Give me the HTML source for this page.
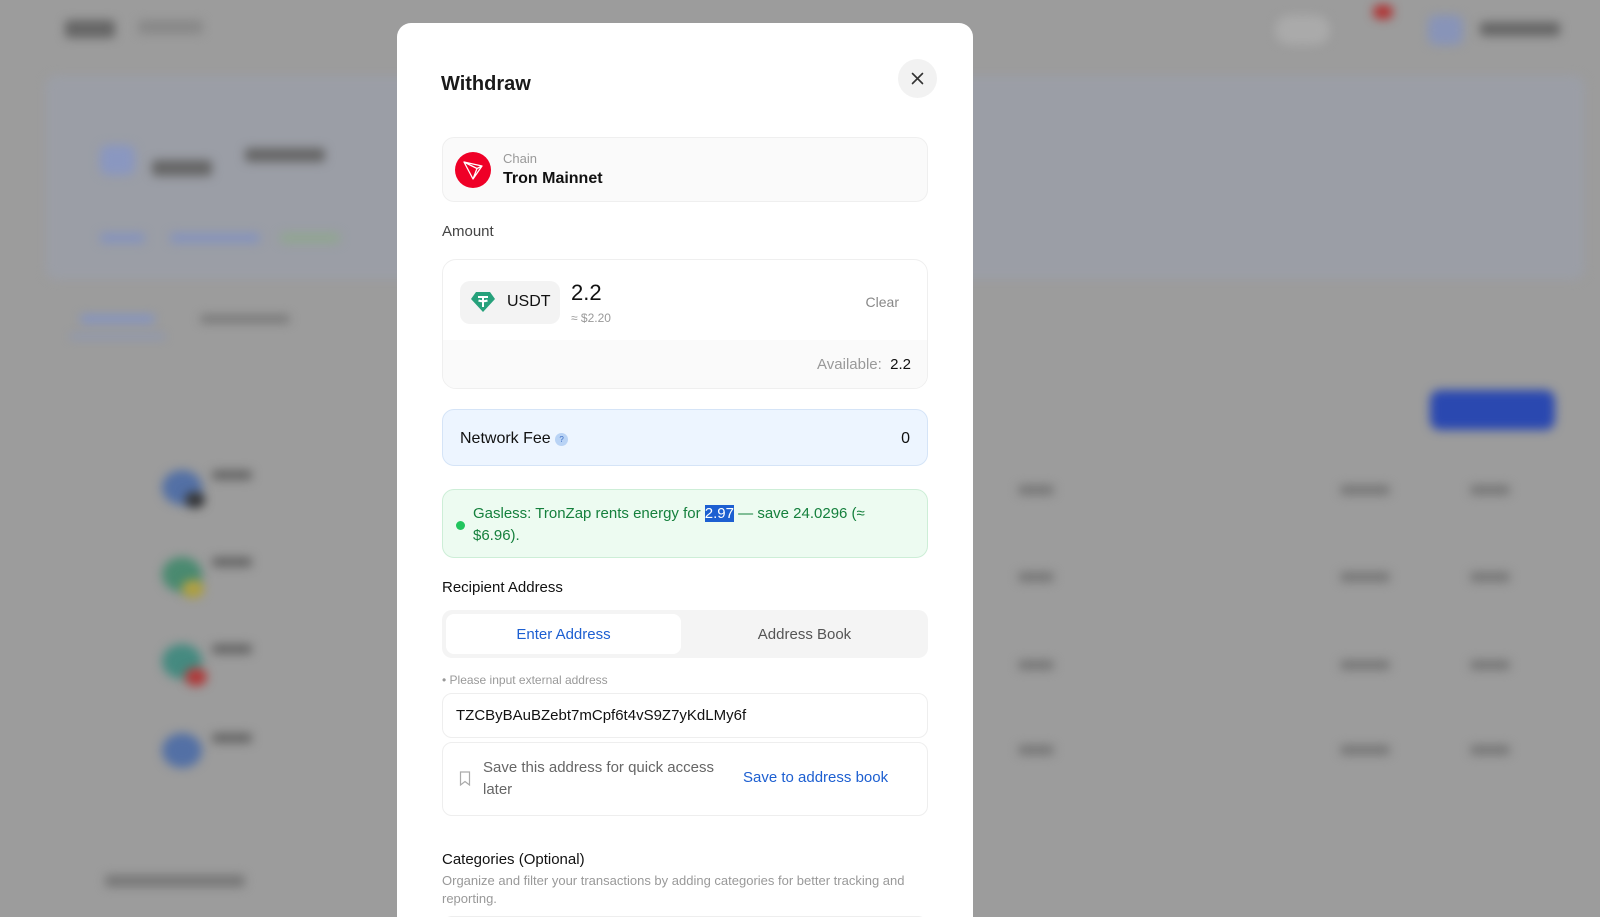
<!DOCTYPE html>
<html><head><meta charset="utf-8"><style>
*{box-sizing:border-box;margin:0;padding:0}
html{width:1600px;height:917px;overflow:hidden}
body{width:1600px;height:917px;overflow:hidden;background:#9c9c9c;font-family:"Liberation Sans",sans-serif;position:relative}
.bg{position:absolute;filter:blur(5px)}
.modal{position:absolute;left:397px;top:23px;width:576px;height:894px;background:#fff;border-radius:14px 14px 0 0;overflow:hidden}
.a{position:absolute}
.t{color:#111}
</style></head><body>
<div class="bg" style="left:65px;top:20px;width:50px;height:18px;background:#666;border-radius:4px"></div>
<div class="bg" style="left:138px;top:20px;width:65px;height:14px;background:#888;border-radius:4px"></div>
<div class="bg" style="left:45px;top:75px;width:1540px;height:205px;background:#9b9ea6;border-radius:12px"></div>
<div class="bg" style="left:100px;top:145px;width:35px;height:30px;background:#8a97c0;border-radius:8px"></div>
<div class="bg" style="left:152px;top:160px;width:60px;height:16px;background:#666;border-radius:4px"></div>
<div class="bg" style="left:245px;top:148px;width:80px;height:14px;background:#666;border-radius:4px"></div>
<div class="bg" style="left:100px;top:233px;width:45px;height:10px;background:#8593bd;border-radius:4px"></div>
<div class="bg" style="left:170px;top:233px;width:90px;height:10px;background:#8593bd;border-radius:4px"></div>
<div class="bg" style="left:280px;top:233px;width:60px;height:10px;background:#90a690;border-radius:4px"></div>
<div class="bg" style="left:80px;top:315px;width:75px;height:8px;background:#8293c4;border-radius:4px"></div>
<div class="bg" style="left:70px;top:335px;width:95px;height:3px;background:#8293c4"></div>
<div class="bg" style="left:200px;top:315px;width:90px;height:8px;background:#777;border-radius:4px"></div>
<div class="bg" style="left:1430px;top:390px;width:125px;height:40px;background:#2a48b0;border-radius:10px"></div>
<div class="bg" style="left:1275px;top:15px;width:55px;height:30px;background:#aaa;border-radius:15px"></div>
<div class="bg" style="left:1373px;top:5px;width:20px;height:14px;background:#b03030;border-radius:8px"></div>
<div class="bg" style="left:1428px;top:15px;width:35px;height:30px;background:#8894b8;border-radius:8px"></div>
<div class="bg" style="left:1480px;top:22px;width:80px;height:14px;background:#666;border-radius:4px"></div>
<div class="bg" style="left:162px;top:470px;width:40px;height:35px;background:#5370a5;border-radius:50%"></div>
<div class="bg" style="left:185px;top:492px;width:20px;height:16px;background:#333;border-radius:50%"></div>
<div class="bg" style="left:162px;top:557px;width:40px;height:35px;background:#4a8a70;border-radius:50%"></div>
<div class="bg" style="left:182px;top:580px;width:22px;height:18px;background:#b0a040;border-radius:50%"></div>
<div class="bg" style="left:162px;top:644px;width:40px;height:35px;background:#458a80;border-radius:50%"></div>
<div class="bg" style="left:185px;top:668px;width:22px;height:18px;background:#b03838;border-radius:50%"></div>
<div class="bg" style="left:162px;top:733px;width:40px;height:35px;background:#5370a5;border-radius:50%"></div>
<div class="bg" style="left:212px;top:470px;width:40px;height:10px;background:#666;border-radius:4px"></div>
<div class="bg" style="left:212px;top:557px;width:40px;height:10px;background:#666;border-radius:4px"></div>
<div class="bg" style="left:212px;top:644px;width:40px;height:10px;background:#666;border-radius:4px"></div>
<div class="bg" style="left:212px;top:733px;width:40px;height:10px;background:#666;border-radius:4px"></div>
<div class="bg" style="left:1018px;top:485px;width:36px;height:10px;background:#777;border-radius:4px"></div>
<div class="bg" style="left:1018px;top:572px;width:36px;height:10px;background:#777;border-radius:4px"></div>
<div class="bg" style="left:1018px;top:660px;width:36px;height:10px;background:#777;border-radius:4px"></div>
<div class="bg" style="left:1018px;top:745px;width:36px;height:10px;background:#777;border-radius:4px"></div>
<div class="bg" style="left:1340px;top:485px;width:50px;height:10px;background:#777;border-radius:4px"></div>
<div class="bg" style="left:1470px;top:485px;width:40px;height:10px;background:#777;border-radius:4px"></div>
<div class="bg" style="left:1340px;top:572px;width:50px;height:10px;background:#777;border-radius:4px"></div>
<div class="bg" style="left:1470px;top:572px;width:40px;height:10px;background:#777;border-radius:4px"></div>
<div class="bg" style="left:1340px;top:660px;width:50px;height:10px;background:#777;border-radius:4px"></div>
<div class="bg" style="left:1470px;top:660px;width:40px;height:10px;background:#777;border-radius:4px"></div>
<div class="bg" style="left:1340px;top:745px;width:50px;height:10px;background:#777;border-radius:4px"></div>
<div class="bg" style="left:1470px;top:745px;width:40px;height:10px;background:#777;border-radius:4px"></div>
<div class="bg" style="left:105px;top:875px;width:140px;height:12px;background:#777;border-radius:4px"></div>

<div class="modal">
  <div class="a t" style="left:44px;top:50px;font-size:20px;font-weight:bold;color:#1a1a1a">Withdraw</div>
  <div class="a" style="left:501px;top:36px;width:39px;height:39px;border-radius:50%;background:#f2f2f2">
    <svg width="39" height="39" viewBox="0 0 39 39"><path d="M14.5 14.5l10 10M24.5 14.5l-10 10" stroke="#333" stroke-width="1.6" stroke-linecap="round"/></svg>
  </div>
  <div class="a" style="left:45px;top:114px;width:486px;height:65px;background:#fafafa;border:1px solid #efefef;border-radius:12px">
    <svg class="a" style="left:12px;top:14px" width="36" height="36" viewBox="0 0 36 36"><circle cx="18" cy="18" r="18" fill="#ef0027"/><path d="M9 10l18 4-9 13z M9 10l9 17 M9 10l13 6.5 5-2.5 M22 16.5l-4 10.5" fill="none" stroke="#fff" stroke-width="1.3" stroke-linejoin="round"/></svg>
    <div class="a" style="left:60px;top:13px;font-size:13px;color:#999">Chain</div>
    <div class="a" style="left:60px;top:32px;font-size:16px;font-weight:bold;color:#111">Tron Mainnet</div>
  </div>
  <div class="a" style="left:45px;top:200px;font-size:15px;color:#444">Amount</div>
  <div class="a" style="left:45px;top:236px;width:486px;height:130px;background:#fff;border:1px solid #efefef;border-radius:14px;overflow:hidden">
    <div class="a" style="left:0;top:80px;width:486px;height:50px;background:#fafafa"></div>
    <div class="a" style="left:17px;top:21px;width:100px;height:43px;background:#f3f3f3;border-radius:10px">
      <svg class="a" style="left:11px;top:10px" width="24" height="22" viewBox="0 0 24 22"><path d="M5 1h14l5 7-12 13L0 8z" fill="#26a17b"/><path d="M7 6h10M12 6v10M7.5 9.5c3 1 6 1 9 0" stroke="#fff" stroke-width="2" fill="none"/></svg>
      <div class="a" style="left:47px;top:12px;font-size:16px;color:#111">USDT</div>
    </div>
    <div class="a" style="left:128px;top:20px;font-size:22px;color:#111">2.2</div>
    <div class="a" style="left:128px;top:51px;font-size:12px;color:#999">≈ $2.20</div>
    <div class="a" style="right:28px;top:34px;font-size:14px;color:#888">Clear</div>
    <div class="a" style="right:16px;top:96px;font-size:15px;color:#999">Available:&nbsp; <span style="color:#111">2.2</span></div>
  </div>
  <div class="a" style="left:45px;top:386px;width:486px;height:57px;background:#edf5ff;border:1px solid #d5e4f7;border-radius:12px">
    <div class="a" style="left:17px;top:20px;font-size:16px;color:#111">Network Fee <span style="display:inline-block;width:13px;height:13px;border-radius:50%;background:#b9d3f5;color:#3a6cc4;font-size:8px;text-align:center;line-height:13px;vertical-align:1px">?</span></div>
    <div class="a" style="right:17px;top:20px;font-size:16px;color:#111">0</div>
  </div>
  <div class="a" style="left:45px;top:466px;width:486px;height:69px;background:#edfbf1;border:1px solid #cdeed7;border-radius:12px">
    <div class="a" style="left:13px;top:31px;width:9px;height:9px;border-radius:50%;background:#22c55e"></div>
    <div class="a" style="left:30px;top:13px;width:430px;font-size:15px;line-height:22px;color:#15803d">Gasless: TronZap rents energy for <span style="background:#1d5fd1;color:#fff">2.97</span> — save 24.0296 (≈ $6.96).</div>
  </div>
  <div class="a" style="left:45px;top:556px;font-size:15px;color:#111">Recipient Address</div>
  <div class="a" style="left:45px;top:587px;width:486px;height:48px;background:#f4f4f4;border-radius:10px">
    <div class="a" style="left:4px;top:4px;width:235px;height:40px;background:#fff;border-radius:8px;text-align:center;line-height:42px;font-size:15px;color:#1d5fd1">Enter Address</div>
    <div class="a" style="left:243px;top:4px;width:239px;height:40px;text-align:center;line-height:42px;font-size:15px;color:#555">Address Book</div>
  </div>
  <div class="a" style="left:45px;top:650px;font-size:12px;color:#999">• Please input external address</div>
  <div class="a" style="left:45px;top:670px;width:486px;height:45px;border:1px solid #eee;border-radius:10px">
    <div class="a" style="left:13px;top:13px;font-size:15px;color:#111">TZCByBAuBZebt7mCpf6t4vS9Z7yKdLMy6f</div>
  </div>
  <div class="a" style="left:45px;top:719px;width:486px;height:74px;border:1px solid #eee;border-radius:10px">
    <svg class="a" style="left:16px;top:28px" width="12" height="15" viewBox="0 0 12 15"><path d="M1.5 1h9v13l-4.5-3.5L1.5 14z" fill="none" stroke="#aaa" stroke-width="1.2"/></svg>
    <div class="a" style="left:40px;top:14px;width:250px;font-size:15px;line-height:22px;color:#666">Save this address for quick access later</div>
    <div class="a" style="left:300px;top:26px;font-size:15px;color:#1d5fd1">Save to address book</div>
  </div>
  <div class="a" style="left:45px;top:828px;font-size:15px;color:#111">Categories (Optional)</div>
  <div class="a" style="left:45px;top:849px;width:480px;font-size:13px;line-height:18px;color:#999">Organize and filter your transactions by adding categories for better tracking and reporting.</div>
  <div class="a" style="left:45px;top:893px;width:486px;height:40px;border:1px solid #eee;border-radius:10px"></div>
</div>
</body></html>
